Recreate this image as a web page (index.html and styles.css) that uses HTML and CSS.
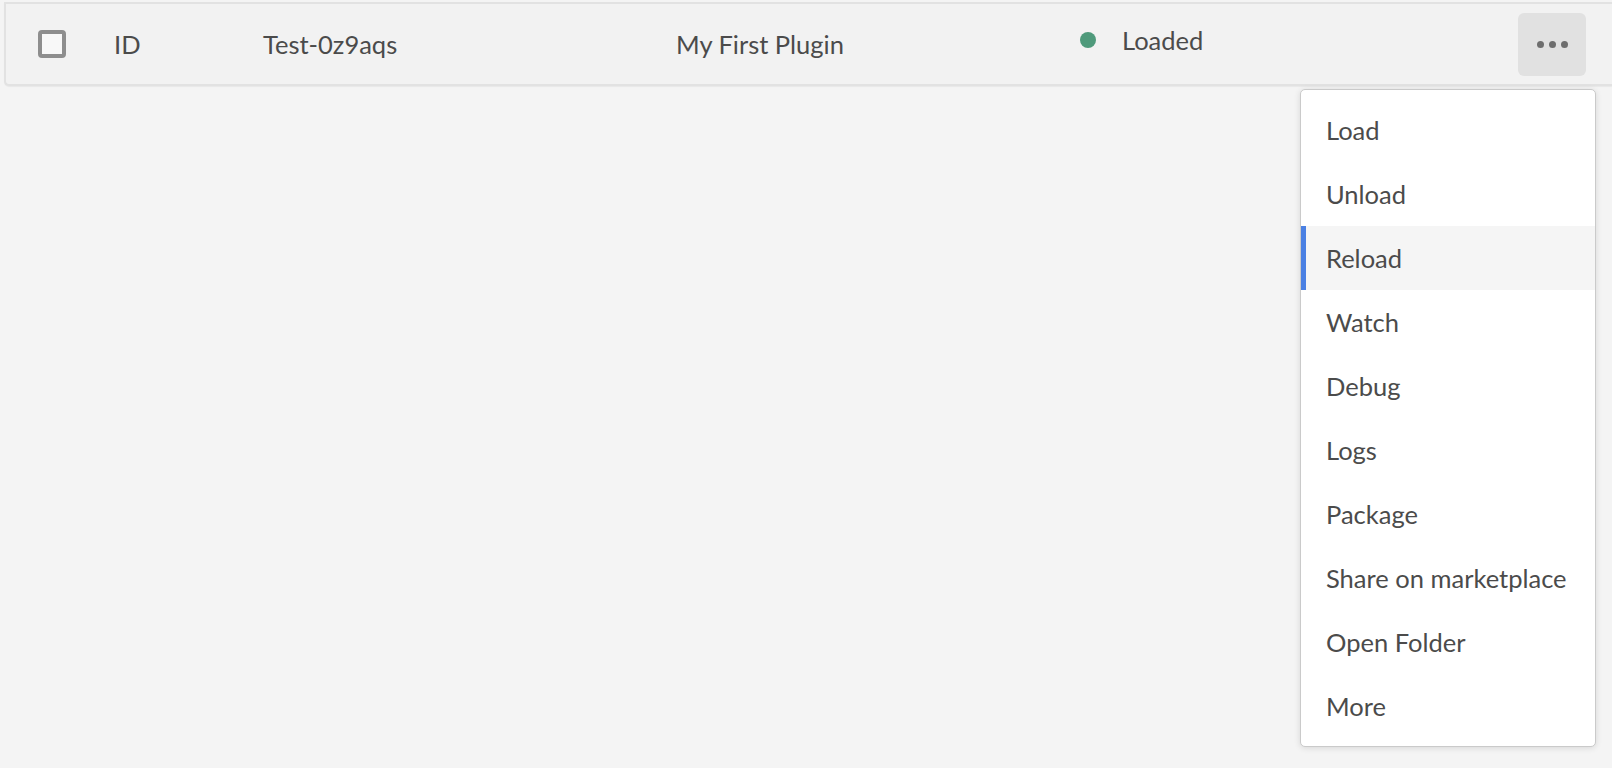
FILE: index.html
```html
<!DOCTYPE html>
<html lang="en">
<head>
<meta charset="utf-8">
<title>Plugins</title>
<link rel="stylesheet" href="styles.css">
</head>
<body>
<div class="page">
  <div class="row">
    <div class="cell cell-check"><span class="checkbox"></span></div>
    <div class="cell cell-id">ID</div>
    <div class="cell cell-name">Test-0z9aqs</div>
    <div class="cell cell-plugin">My First Plugin</div>
    <div class="cell cell-status"><span class="dot"></span><span>Loaded</span></div>
    <div class="cell cell-action">
      <button class="more-btn" aria-label="More actions"><span></span><span></span><span></span></button>
    </div>
  </div>
</div>
<ul class="menu">
  <li class="item">Load</li>
  <li class="item">Unload</li>
  <li class="item active">Reload</li>
  <li class="item">Watch</li>
  <li class="item">Debug</li>
  <li class="item">Logs</li>
  <li class="item">Package</li>
  <li class="item">Share on marketplace</li>
  <li class="item">Open Folder</li>
  <li class="item">More</li>
</ul>
</body>
</html>
```
FILE: styles.css
```css
html, body {
  margin: 0;
  padding: 0;
}
body {
  background: #f4f4f4;
  font-family: Lato, "Open Sans", sans-serif;
  font-size: 25.5px;
  color: #4b4b4b;
  height: 768px;
  overflow: hidden;
}
.page {
  padding: 2px 0 0 4px;
}
.row {
  display: flex;
  align-items: center;
  height: 80px;
  border: 2px solid #e2e2e2;
  border-right: none;
  border-radius: 0 0 0 5px;
  background: #f2f2f2;
  padding: 0 26px 0 32px;
  box-shadow: 0 1px 1px rgba(0, 0, 0, 0.05);
}
.cell {
  flex: none;
}
.cell-check {
  width: 76px;
  display: flex;
  align-items: center;
}
.checkbox {
  display: block;
  width: 28px;
  height: 28px;
  box-sizing: border-box;
  border: 4px solid #8e8e8e;
  border-radius: 4px;
  background: #f8f8f8;
}
.cell-id {
  width: 149px;
}
.cell-name {
  width: 413px;
}
.cell-plugin {
  width: 404px;
}
.cell-status {
  flex: 1;
  display: flex;
  align-items: center;
  gap: 26px;
  margin-bottom: 8px;
}
.dot {
  width: 16px;
  height: 16px;
  border-radius: 50%;
  background: #4f9a7b;
}
.more-btn {
  width: 68px;
  height: 63px;
  border: none;
  border-radius: 6px;
  background: #e1e1e1;
  display: flex;
  align-items: center;
  justify-content: center;
  gap: 5px;
  padding: 0;
}
.more-btn span {
  width: 7px;
  height: 7px;
  border-radius: 50%;
  background: #6e6e6e;
}
.menu {
  position: absolute;
  top: 89px;
  right: 16px;
  width: 296px;
  box-sizing: border-box;
  margin: 0;
  padding: 8px 0;
  list-style: none;
  background: #ffffff;
  border: 1px solid #cacaca;
  border-radius: 5px;
  box-shadow: 0 1px 6px rgba(0, 0, 0, 0.12);
}
.item {
  height: 64px;
  display: flex;
  align-items: center;
  padding-left: 25px;
}
.item.active {
  background: #f5f5f5;
  box-shadow: inset 5px 0 0 #4a80e3;
}
```
